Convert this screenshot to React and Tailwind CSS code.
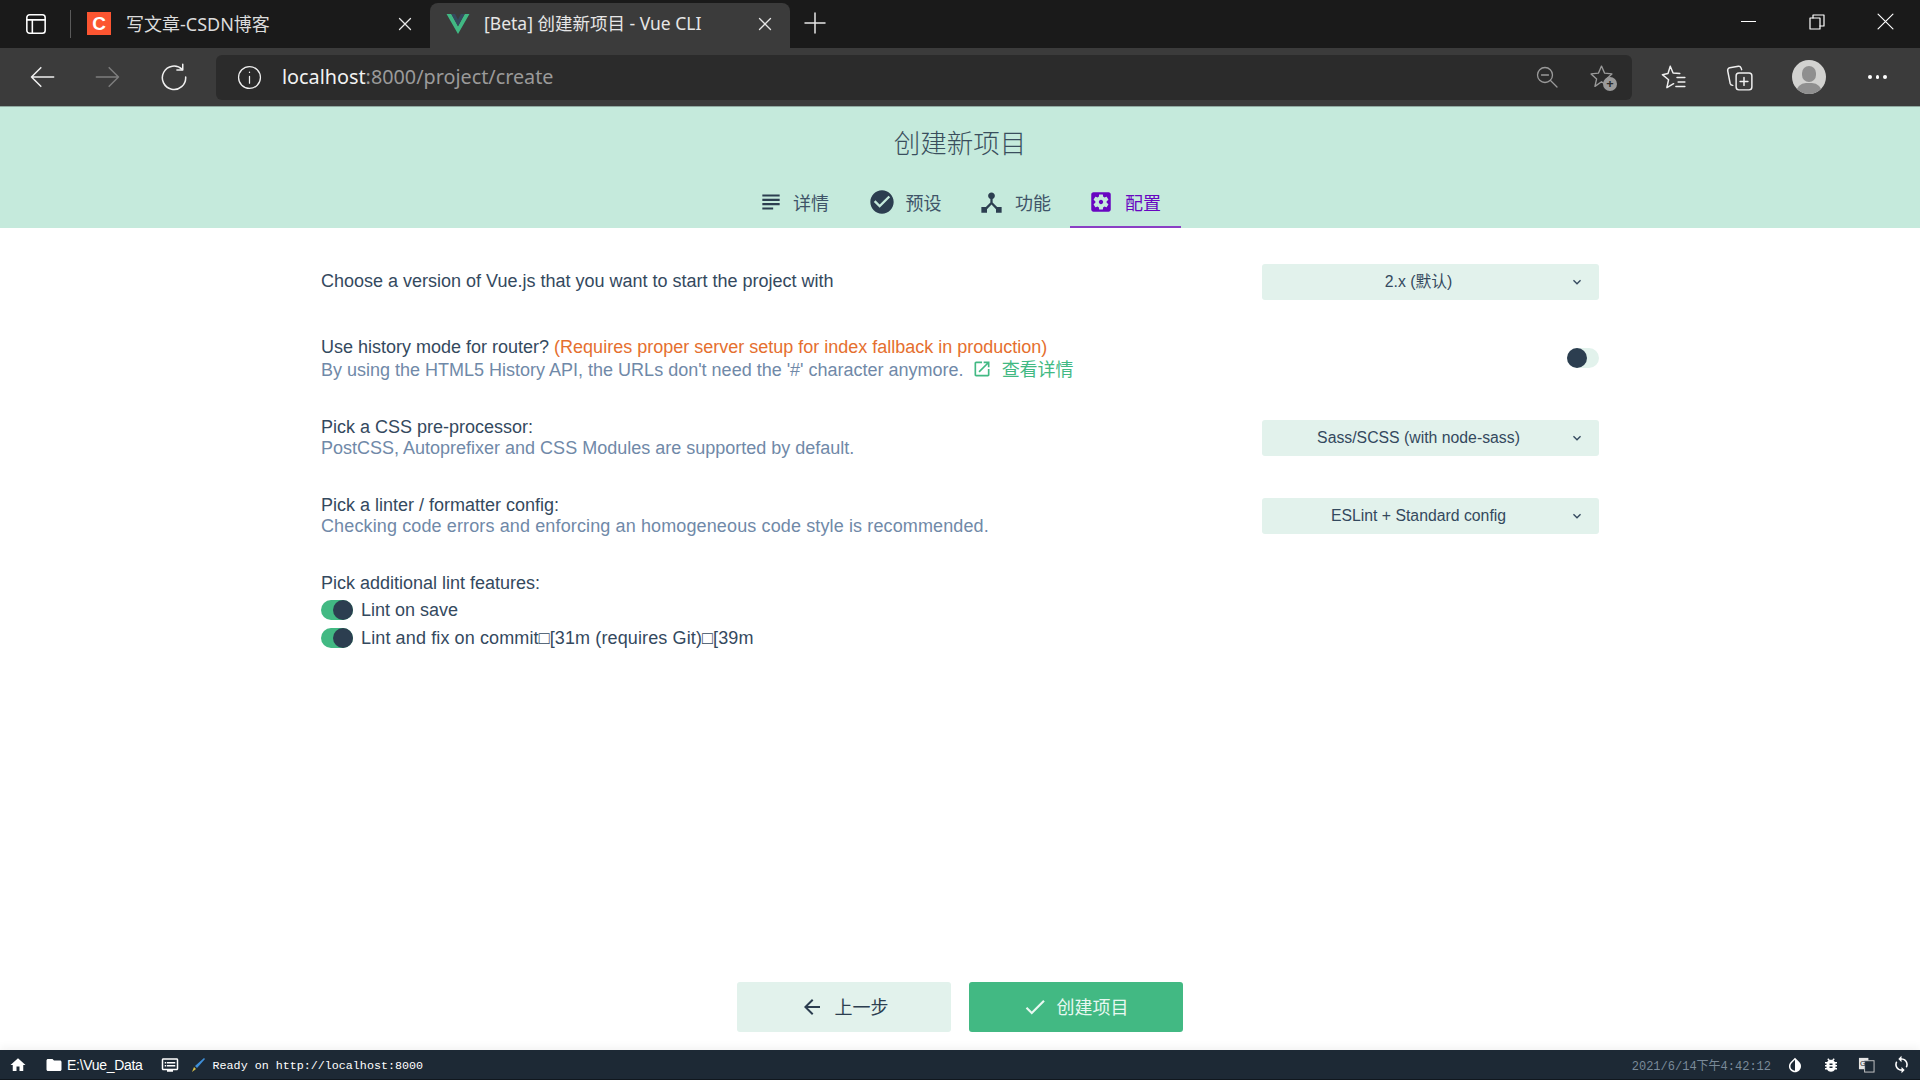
import React from "react";

const Mi = ({ d, className = "" }) => (
  <svg viewBox="0 0 24 24" fill="currentColor" className={className}><path d={d} /></svg>
);
const P = {
  subject: "M14 17H4v2h10v-2zm6-8H4v2h16V9zM4 15h16v-2H4v2zM4 5v2h16V5H4z",
  check: "M12 2C6.48 2 2 6.48 2 12s4.48 10 10 10 10-4.48 10-10S17.52 2 12 2zm-2 15l-5-5 1.41-1.41L10 14.17l7.59-7.59L19 8l-9 9z",
  hub: "M17 16l-4-4V8.82C14.16 8.4 15 7.3 15 6c0-1.66-1.34-3-3-3S9 4.34 9 6c0 1.3.84 2.4 2 2.82V12l-4 4H3v5h5v-3.05l4-4.2 4 4.2V21h5v-5h-4z",
  settings: "M12 10c-1.1 0-2 .9-2 2s.9 2 2 2 2-.9 2-2-.9-2-2-2zm7-7H5c-1.11 0-2 .9-2 2v14c0 1.1.89 2 2 2h14c1.11 0 2-.9 2-2V5c0-1.1-.89-2-2-2zm-1.75 9c0 .23-.02.46-.05.68l1.48 1.16c.13.11.17.3.08.45l-1.4 2.42c-.09.15-.27.21-.43.15l-1.74-.7c-.36.28-.76.51-1.18.69l-.26 1.85c-.03.17-.18.3-.35.3h-2.8c-.17 0-.32-.13-.35-.29l-.26-1.85c-.43-.18-.82-.41-1.18-.69l-1.74.7c-.16.06-.34 0-.43-.15l-1.4-2.42c-.09-.15-.05-.34.08-.45l1.48-1.16c-.03-.23-.05-.46-.05-.69 0-.23.02-.46.05-.68l-1.48-1.16c-.13-.11-.17-.3-.08-.45l1.4-2.42c.09-.15.27-.21.43-.15l1.74.7c.36-.28.76-.51 1.18-.69l.26-1.85c.03-.17.18-.3.35-.3h2.8c.17 0 .32.13.35.29l.26 1.85c.43.18.82.41 1.18.69l1.74-.7c.16-.06.34 0 .43.15l1.4 2.42c.09.15.05.34-.08.45l-1.48 1.16c.03.23.05.46.05.69z",
  open: "M19 19H5V5h7V3H5c-1.11 0-2 .9-2 2v14c0 1.1.89 2 2 2h14c1.1 0 2-.9 2-2v-7h-2v7zM14 3v2h3.59l-9.83 9.83 1.41 1.41L19 6.41V10h2V3h-7z",
  back: "M20 11H7.83l5.59-5.59L12 4l-8 8 8 8 1.41-1.41L7.83 13H20v-2z",
  done: "M9 16.17L4.83 12l-1.41 1.41L9 19 21 7l-1.41-1.41z",
  more: "M16.59 8.59L12 13.17 7.41 8.59 6 10l6 6 6-6z",
  home: "M10 20v-6h4v6h5v-8h3L12 3 2 12h3v8z",
  folder: "M10 4H4c-1.1 0-2 .9-2 2v12c0 1.1.9 2 2 2h16c1.1 0 2-.9 2-2V8c0-1.1-.9-2-2-2h-8l-2-2z",
  dvr: "M21 3H3c-1.1 0-2 .9-2 2v12c0 1.1.9 2 2 2h5v2h8v-2h5c1.1 0 2-.9 2-2V5c0-1.1-.9-2-2-2zm0 14H3V5h18v12zm-2-9H8v2h11V8zm0 4H8v2h11v-2zM7 8H5v2h2V8zm0 4H5v2h2v-2z",
  invert: "M17.66 7.93L12 2.27 6.34 7.93c-3.12 3.12-3.12 8.19 0 11.31C7.9 20.8 9.95 21.58 12 21.58c2.05 0 4.1-.78 5.66-2.34 3.12-3.12 3.12-8.19 0-11.31zM12 19.59c-1.6 0-3.11-.62-4.24-1.76C6.62 16.69 6 15.19 6 13.59s.62-3.11 1.76-4.24L12 5.1v14.49z",
  bug: "M20 8h-2.81c-.45-.78-1.07-1.45-1.82-1.96L17 4.41 15.59 3l-2.17 2.17C12.96 5.06 12.49 5 12 5c-.49 0-.96.06-1.41.17L8.41 3 7 4.41l1.62 1.63C7.88 6.55 7.26 7.22 6.81 8H4v2h2.09c-.05.33-.09.66-.09 1v1H4v2h2v1c0 .34.04.67.09 1H4v2h2.81c1.04 1.79 2.97 3 5.19 3s4.15-1.21 5.19-3H20v-2h-2.09c.05-.33.09-.66.09-1v-1h2v-2h-2v-1c0-.34-.04-.67-.09-1H20V8zm-6 8h-4v-2h4v2zm0-4h-4v-2h4v2z",
  sync: "M12 4V1L8 5l4 4V6c3.31 0 6 2.69 6 6 0 1.01-.25 1.97-.7 2.8l1.46 1.46C19.54 15.03 20 13.57 20 12c0-4.42-3.58-8-8-8zm0 14c-3.31 0-6-2.69-6-6 0-1.01.25-1.97.7-2.8L5.24 7.74C4.46 8.97 4 10.43 4 12c0 4.42 3.58 8 8 8v3l4-4-4-4v3z",
};

const Stroke = ({ children, className = "", vb = "0 0 24 24", sw = 1.5 }) => (
  <svg viewBox={vb} fill="none" stroke="currentColor" strokeWidth={sw} strokeLinecap="round" strokeLinejoin="round" className={className}>{children}</svg>
);

const uiFont = "font-['Noto_Sans','Noto_Sans_CJK_SC',sans-serif]";

function TabClose() {
  return (
    <Stroke className="w-[14px] h-[14px] text-[#e6e6e6] -mt-1" vb="0 0 14 14" sw={1.3}><path d="M1.5 1.5l11 11M12.5 1.5l-11 11" /></Stroke>
  );
}

function Browser() {
  return (
    <div className={`shrink-0 ${uiFont}`}>
      <div className="h-12 bg-[#1a1a1a] flex items-end relative">
        <div className="flex items-center h-[45px] w-[430px]">
          <Stroke className="ml-[25px] w-[22px] h-[22px] text-white -mt-1" sw={1.7}>
            <rect x="2" y="2" width="20" height="20" rx="3" /><path d="M2 7.5h20M8 7.5V22" />
          </Stroke>
          <div className="ml-[23px] w-px h-7 bg-[#5a5a5a] -mt-1" />
          <div className="ml-[16px] w-[24px] h-[23px] bg-[#fc5531] text-white font-bold text-[19px] leading-[23px] text-center -mt-1 font-['Liberation_Sans',sans-serif]">C</div>
          <span className="ml-[15px] text-[18px] text-[#dcdcdc] leading-none w-[272px] -mt-1">写文章-CSDN博客</span>
          <TabClose />
        </div>
        <div className="w-[360px] h-[45px] bg-[#3b3b3b] rounded-t-lg flex items-center">
          <svg viewBox="0 0 24 22" className="ml-[16px] w-[24px] h-[21px] -mt-1"><path d="M0 1h5l7 13L19 1h5L12 22z" fill="#41b883" /><path d="M5 1h4l3 6 3-6h4l-7 13z" fill="#35495e" /></svg>
          <span className="ml-[14px] text-[17.5px] text-[#e6e6e6] leading-none w-[274px] whitespace-nowrap -mt-1">[Beta] 创建新项目 - Vue CLI</span>
          <TabClose />
        </div>
        <Stroke className="ml-[14px] mb-[14px] w-[22px] h-[22px] text-[#e6e6e6] self-end" vb="0 0 22 22" sw={1.5}><path d="M11 1v20M1 11h20" /></Stroke>
        <div className="flex-1" />
        <div className="flex items-center self-start mt-[13px] mr-[26px]">
          <div className="w-[15px] h-[1.5px] bg-white" />
          <Stroke className="ml-[53px] w-[16px] h-[16px] text-white" vb="0 0 16 16" sw={1.2}><rect x="1" y="4" width="10" height="11" /><path d="M4 4V1h11v11h-4" /></Stroke>
          <Stroke className="ml-[52px] w-[17px] h-[17px] text-white" vb="0 0 16 16" sw={1.1}><path d="M1 1l14 14M15 1L1 15" /></Stroke>
        </div>
      </div>
      <div className="h-[58px] bg-[#3b3b3b] flex items-center">
        <Stroke className="ml-[28px] w-[28px] h-[28px] text-[#f0f0f0]" sw={1.3}><path d="M22 12H3M11 4l-8 8 8 8" /></Stroke>
        <Stroke className="ml-[38px] w-[28px] h-[28px] text-[#7d7d7d]" sw={1.3}><path d="M2 12h19M13 4l8 8-8 8" /></Stroke>
        <Stroke className="ml-[38px] w-[28px] h-[28px] text-[#f0f0f0]" sw={1.3}><path d="M19 5.5A10 10 0 1 0 22 12" /><path d="M19.5 1v5h-5" /></Stroke>
        <div className="ml-[28px] w-[1416px] h-[45px] bg-[#2b2b2b] rounded-md flex items-center">
          <Stroke className="ml-[21px] w-[25px] h-[25px] text-[#f0f0f0]" sw={1.2}><circle cx="12" cy="12" r="10.5" /><path d="M12 11v6.5M12 6.8v.3" /></Stroke>
          <span className="ml-[20px] text-[19.8px] leading-none text-[#f2f2f2] whitespace-nowrap">localhost<span className="text-[#9a9a9a]">:8000/project/create</span></span>
          <div className="flex-1" />
          <Stroke className="w-[24px] h-[24px] text-[#9a9a9a]" sw={1.3}><circle cx="10" cy="10" r="7.5" /><path d="M6.5 10h7M15.5 15.5L22 22" /></Stroke>
          <div className="relative ml-[30px] mr-[17px] w-[26px] h-[26px]">
            <Stroke className="w-[25px] h-[25px] text-[#9a9a9a]" sw={1.3}><path d="M12 2l3 6.8 7 .7-5.3 4.8 1.6 7.2L12 17l-6.3 4.5 1.6-7.2L2 9.500l7-.7z" /></Stroke>
            <div className="absolute right-[-2px] bottom-[-1px] w-[14px] h-[14px] rounded-full bg-[#9a9a9a] text-[#2b2b2b] text-[13px] leading-[13px] font-bold text-center">+</div>
          </div>
        </div>
        <Stroke className="ml-[27px] w-[27px] h-[27px] text-[#f0f0f0]" sw={1.3}><path d="M10 2l2.500 6 6 .5M7 21l1.500-7L3 9.500 8 8.500 10 2M7 21l6-3.500" /><path d="M16 12h7M17 16h6M15 20h8" /></Stroke>
        <Stroke className="ml-[40px] w-[27px] h-[27px] text-[#f0f0f0]" sw={1.3}><rect x="9" y="8" width="14" height="15" rx="2.500" /><path d="M16 12v7M12.500 15.500h7M6 19c-1 0-2-.6-2.300-1.700L1.500 6c-.2-1.200.5-2.500 1.800-2.700L11 2c1.200-.2 2 .5 2.400 1.500l.5 1.500" /></Stroke>
        <div className="ml-[39px] w-[34px] h-[34px] rounded-full bg-[#d2d2d0] overflow-hidden relative">
          <div className="absolute left-[10px] top-[6px] w-[14px] h-[16px] rounded-full bg-[#8f8f8f]" />
          <div className="absolute left-[4px] top-[23px] w-[26px] h-[20px] rounded-full bg-[#8f8f8f]" />
        </div>
        <div className="ml-[42px] flex gap-[4px]">
          <span className="w-[3.500px] h-[3.500px] rounded-full bg-white" />
          <span className="w-[3.500px] h-[3.500px] rounded-full bg-white" />
          <span className="w-[3.500px] h-[3.500px] rounded-full bg-white" />
        </div>
      </div>
      <div className="h-px bg-[#8fa9a0]" />
    </div>
  );
}

const tabs = [
  ["详情", P.subject, "w-[26px] h-[26px] text-[#2c3e50]", "gap-[9px] pl-[2px]"],
  ["预设", P.check, "w-[28px] h-[28px] text-[#2c3e50]", "gap-[10px] pl-[2px]"],
  ["功能", P.hub, "w-[27px] h-[27px] text-[#2c3e50]", "gap-[10px]"],
  ["配置", P.settings, "w-[26px] h-[26px] text-[#6806c1]", "gap-[11px] pr-[2px]"],
];

function Header() {
  return (
    <div className="h-[121px] shrink-0 bg-[#c5eadc] flex flex-col items-center">
      <div className="mt-[15px] h-[40px] text-[26.500px] leading-[40px] font-light text-[#2c3e50] opacity-90">创建新项目</div>
      <div className="mt-[22px] -ml-[2px] grid grid-cols-[repeat(4,111px)] h-[44px]">
        {tabs.map(([t, d, c, g], i) => (
          <div key={t} className={`flex items-center justify-center border-b-2 pb-[6px] ${g} ${i === 3 ? "border-[#8a3fc4] text-[#6806c1]" : "border-transparent text-[#3f5468]"}`}>
            <Mi d={d} className={c} />
            <span className="text-[18px] leading-none">{t}</span>
          </div>
        ))}
      </div>
    </div>
  );
}

function Select({ value }) {
  return (
    <div className="w-[337px] h-[36px] rounded-[3px] bg-[#e2f2ec] flex items-center text-[#34495e]">
      <span className="flex-1 text-center text-[15.8px] pl-[26px] whitespace-nowrap -mt-px">{value}</span>
      <Mi d={P.more} className="w-[16px] h-[16px] mr-[14px] ml-[20px]" />
    </div>
  );
}

function Toggle({ on }) {
  return (
    <div className={`w-[32px] h-[20px] rounded-full flex shrink-0 ${on ? "bg-[#42b983] justify-end" : "bg-[#e2f2ec] justify-start"}`}>
      <div className="w-[20px] h-[20px] rounded-full bg-[#2c3e50]" />
    </div>
  );
}

function Form() {
  const sub = "text-[#7089a8]";
  return (
    <div className="flex-1 px-[321px] pt-[36px] flex flex-col gap-[36px] text-[18px] leading-[21px] text-[#34495e] font-['Liberation_Sans','Noto_Sans_CJK_SC',sans-serif]">
      <div className="flex items-center justify-between h-[36px]">
        <div className="-mt-px">Choose a version of Vue.js that you want to start the project with</div>
        <Select value="2.x (默认)" />
      </div>
      <div className="flex items-center justify-between h-[45px]">
        <div>
          <div className="h-[23px] leading-[22px]">Use history mode for router? <span className="text-[#e56f2e]">(Requires proper server setup for index fallback in production)</span></div>
          <div className={`h-[23px] leading-[25px] flex items-center ${sub}`}>
            By using the HTML5 History API, the URLs don't need the '#' character anymore.
            <span className="ml-[8px] text-[#42b983] flex items-center gap-[10px]"><Mi d={P.open} className="w-[20px] h-[20px] -mt-[2px]" />查看详情</span>
          </div>
        </div>
        <div className="-mt-px"><Toggle /></div>
      </div>
      <div className="flex items-center justify-between h-[42px]">
        <div>
          <div>Pick a CSS pre-processor:</div>
          <div className={sub}>PostCSS, Autoprefixer and CSS Modules are supported by default.</div>
        </div>
        <Select value="Sass/SCSS (with node-sass)" />
      </div>
      <div className="flex items-center justify-between h-[42px]">
        <div>
          <div>Pick a linter / formatter config:</div>
          <div className={`${sub} tracking-[0.125px]`}>Checking code errors and enforcing an homogeneous code style is recommended.</div>
        </div>
        <Select value="ESLint + Standard config" />
      </div>
      <div>
        <div>Pick additional lint features:</div>
        <div className="mt-[2px] flex flex-col">
          <div className="flex items-center gap-[8px] h-[28px]"><Toggle on />Lint on save</div>
          <div className="flex items-center gap-[8px] h-[28px]"><Toggle on /><span className="tracking-[0.12px]">Lint and fix on commit□[31m (requires Git)□[39m</span></div>
        </div>
      </div>
    </div>
  );
}

function Footer() {
  return (
    <div className="h-[68px] shrink-0 flex justify-center gap-[18px] text-[18px] font-['Noto_Sans_CJK_SC',sans-serif]">
      <div className="w-[214px] h-[50px] rounded-[3px] bg-[#e2f2ec] text-[#2c3e50] flex items-center justify-center gap-[11px]">
        <Mi d={P.back} className="w-[24px] h-[24px]" /><span className="-mt-[2px]">上一步</span>
      </div>
      <div className="w-[214px] h-[50px] rounded-[3px] bg-[#42b983] text-[#e8f8f1] flex items-center justify-center gap-[9px] pr-[2px]">
        <Mi d={P.done} className="w-[26px] h-[26px]" /><span className="-mt-[2px]">创建项目</span>
      </div>
    </div>
  );
}

function StatusBar() {
  return (
    <div className="h-[30px] shrink-0 bg-[#1d2935] border-b border-[#10171e] flex items-center shadow-[0_-3px_8px_rgba(0,0,0,0.05)] text-white">
      <Mi d={P.home} className="ml-[9px] w-[18px] h-[18px]" />
      <Mi d={P.folder} className="ml-[18px] w-[18px] h-[18px]" />
      <span className="ml-[4px] text-[14px] font-['Liberation_Sans',sans-serif] tracking-[-0.3px] mt-px">E:\Vue_Data</span>
      <Mi d={P.dvr} className="ml-[18px] w-[18px] h-[18px]" />
      <svg viewBox="0 0 16 16" className="ml-[11px] w-[16px] h-[16px]"><path d="M14 1L5 9l2 2 8-9z" fill="#3f8fd8" /><path d="M4 10l2 2-4 3z" fill="#d8c04a" /></svg>
      <span className="ml-[7px] mt-[4px] text-[11.700px] font-['Liberation_Mono',monospace]">Ready on http://localhost:8000</span>
      <div className="flex-1" />
      <span className="mt-[4px] text-[12px] text-[#7a8a99] font-['Liberation_Mono','Noto_Sans_CJK_SC',monospace] whitespace-nowrap">2021/6/14下午4:42:12</span>
      <Mi d={P.invert} className="ml-[15px] w-[18px] h-[18px]" />
      <Mi d={P.bug} className="ml-[18px] w-[18px] h-[18px]" />
      <svg viewBox="0 0 18 18" className="ml-[18px] w-[17px] h-[17px]"><rect x="1" y="2" width="10" height="12" fill="#e6e6e6" /><rect x="7" y="5" width="10" height="12" fill="#1d2935" stroke="#c8c8c8" /><text x="2" y="11" fontSize="8" fill="#1d2935" fontFamily="Liberation Sans">G</text></svg>
      <Mi d={P.sync} className="ml-[17px] mr-[9px] w-[19px] h-[19px]" />
    </div>
  );
}

export default function App() {
  return (
    <div className="w-[1920px] h-[1080px] flex flex-col bg-white overflow-hidden font-['Noto_Sans_CJK_SC',sans-serif]">
      <Browser />
      <Header />
      <Form />
      <Footer />
      <StatusBar />
    </div>
  );
}
